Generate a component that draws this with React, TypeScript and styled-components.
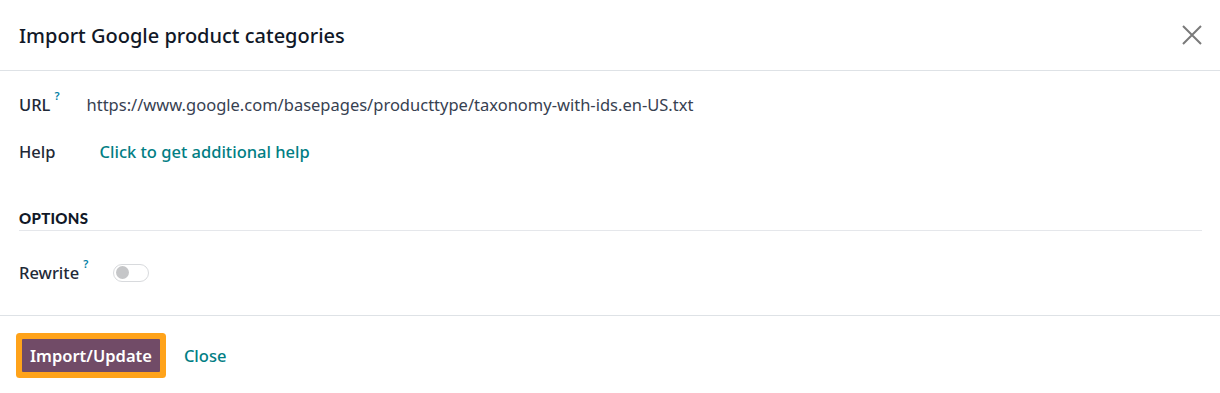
import React from "react";
import styled, { createGlobalStyle } from "styled-components";

const Global = createGlobalStyle`
  html, body { margin: 0; padding: 0; background: #fff; }
  body { font-family: "Noto Sans", "Open Sans", sans-serif; color: #212529; }
`;

const Dialog = styled.div`
  width: 1220px;
  display: flex;
  flex-direction: column;
  background: #fff;
`;

const Header = styled.header`
  flex-shrink: 0;
  height: 71px;
  box-sizing: border-box;
  display: flex;
  align-items: center;
  justify-content: space-between;
  padding: 0 17px 0 19px;
  border-bottom: 1px solid #dee2e6;
`;

const Title = styled.h4`
  margin: 0;
  font-size: 20px;
  font-weight: 500;
  color: #111827;
`;

const CloseX = styled.button`
  border: 0;
  background: none;
  padding: 0;
  width: 22px;
  height: 22px;
  display: flex;
  align-items: center;
  justify-content: center;
  cursor: pointer;
`;

const Body = styled.div`
  flex-shrink: 0;
  padding: 20px 18px 0 19px;
  height: 245px;
  box-sizing: border-box;
  border-bottom: 1px solid #dee2e6;
`;

const Row = styled.div<{ $gap: number; $h: number; $top?: number }>`
  display: flex;
  align-items: center;
  height: ${(p) => p.$h}px;
  gap: ${(p) => p.$gap}px;
  margin-top: ${(p) => p.$top ?? 0}px;
`;

const Label = styled.span`
  font-size: 16.5px;
  font-weight: 500;
  color: #1f2937;
  display: inline-flex;
  align-items: flex-start;
`;

const Help = styled.sup`
  color: #0180a5;
  font-size: 11px;
  font-weight: 600;
  margin-left: 4px;
  line-height: 1;
  position: relative;
  top: -3px;
`;

const Value = styled.span`
  font-size: 16.5px;
  color: #374151;
`;

const Link = styled.a`
  font-size: 16.5px;
  font-weight: 500;
  color: #017e84;
  text-decoration: none;
`;

const Section = styled.div`
  margin-top: 44px;
  border-bottom: 1px solid #e5e7eb;
  padding-bottom: 3px;
`;

const SectionTitle = styled.div`
  font-family: "Lato", sans-serif;
  font-weight: 900;
  font-size: 15px;
  letter-spacing: 0.3px;
  color: #111827;
  text-transform: uppercase;
`;

const Toggle = styled.span`
  width: 36px;
  height: 18px;
  box-sizing: border-box;
  border: 1px solid #d8dadd;
  border-radius: 9px;
  display: flex;
  align-items: center;
  padding-left: 2px;
  &::before {
    content: "";
    width: 13px;
    height: 13px;
    border-radius: 50%;
    background: #c5c6c8;
  }
`;

const Footer = styled.footer`
  display: flex;
  align-items: center;
  gap: 18px;
  padding: 17px 16px;
`;

const Primary = styled.button`
  font-family: inherit;
  font-size: 16.5px;
  font-weight: 600;
  color: #fff;
  background: #714b67;
  border: 0;
  border-radius: 1px;
  box-shadow: 0 0 0 6px #ffa31a;
  margin: 6px;
  padding: 0 8px;
  height: 33px;
`;

export default function App() {
  return (
    <>
      <Global />
      <Dialog>
        <Header>
          <Title>Import Google product categories</Title>
          <CloseX aria-label="Close">
            <svg width="20" height="20" viewBox="0 0 20 20">
              <path d="M1 1 L19 19 M19 1 L1 19" stroke="#7a7a7a" strokeWidth="2" />
            </svg>
          </CloseX>
        </Header>
        <Body>
          <Row $gap={27} $h={27}>
            <Label>
              URL<Help>?</Help>
            </Label>
            <Value>https://www.google.com/basepages/producttype/taxonomy-with-ids.en-US.txt</Value>
          </Row>
          <Row $gap={44} $h={27} $top={20}>
            <Label>Help</Label>
            <Link href="#">Click to get additional help</Link>
          </Row>
          <Section>
            <SectionTitle>Options</SectionTitle>
          </Section>
          <Row $gap={25} $h={27} $top={28}>
            <Label>
              Rewrite<Help>?</Help>
            </Label>
            <Toggle />
          </Row>
        </Body>
        <Footer>
          <Primary>Import/Update</Primary>
          <Link href="#">Close</Link>
        </Footer>
      </Dialog>
    </>
  );
}
